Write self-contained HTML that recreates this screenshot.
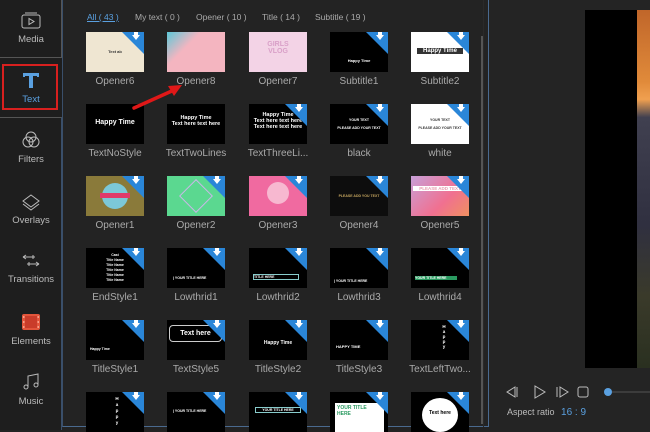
<!DOCTYPE html>
<html><head><meta charset="utf-8"><style>
*{margin:0;padding:0;box-sizing:border-box}
body{width:650px;height:430px;background:#232323;font-family:"Liberation Sans",sans-serif;position:relative;overflow:hidden;color:#bbb}
.a{position:absolute}
.side{left:0;top:0;width:62px;height:430px;background:#1e1e1e}
.sb{position:absolute;left:0;width:62px;text-align:center;font-size:9.5px;color:#bbb}
.sb svg{display:block;margin:0 auto 4px}
.grid{left:62px;top:0;width:427px;height:427px;background:#232323;border-right:1px solid #4a6a8f;border-left:1px solid #3a4f6a;border-bottom:1px solid #4a6a8f}
.t{position:absolute;width:58px;height:40px;background:#000;overflow:hidden;font-weight:bold;color:#fff;text-align:center}
.t .d{position:absolute;right:0;top:0;width:22px;height:22px;background:#2a86d8;clip-path:polygon(0 0,100% 0,100% 100%)}
.t .d:after{content:"";position:absolute;right:4px;top:3px;width:0;height:0;border-left:4px solid transparent;border-right:4px solid transparent;border-top:5px solid #fff}
.t .d:before{content:"";position:absolute;right:6px;top:0;width:4px;height:4px;background:#fff}
.l{position:absolute;width:80px;text-align:center;font-size:10px;color:#aaa}
.tab{top:12px;font-size:8.5px;color:#aaa}
</style></head><body>
<div class="a side"></div>
<div class="a" style="left:0;top:0;width:62px;height:58px;border-right:1px solid #555;border-bottom:1px solid #555"></div>
<div class="sb" style="top:12px"><svg width="20" height="18" viewBox="0 0 20 18"><rect x="1" y="3" width="18" height="13" rx="2" fill="none" stroke="#bbb"/><path d="M4 1h12" stroke="#bbb"/><path d="M8 6.5v6l5-3z" fill="none" stroke="#bbb"/></svg>Media</div>
<div class="a" style="left:2px;top:64px;width:56px;height:46px;border:2px solid #d8201f"></div>
<div class="sb" style="top:70px;color:#5aa0e0"><svg width="20" height="20" viewBox="0 0 20 20"><path d="M2 3h16v4h-2V6h-4v12H8V6H4v1H2z" fill="#5aa0e0"/></svg>Text</div>
<div class="a" style="left:0;top:117px;width:62px;height:313px;border-right:1px solid #3a4f6a;border-top:1px solid #555"></div>
<div class="sb" style="top:130px"><svg width="20" height="20" viewBox="0 0 20 20" fill="none" stroke="#bbb"><circle cx="10" cy="7" r="5"/><circle cx="7" cy="12" r="5"/><circle cx="13" cy="12" r="5"/></svg>Filters</div>
<div class="sb" style="top:193px"><svg width="20" height="18" viewBox="0 0 20 18" fill="none" stroke="#bbb"><path d="M10 2l8 6-8 6-8-6z"/><path d="M2 11l8 6 8-6"/></svg>Overlays</div>
<div class="sb" style="top:252px"><svg width="22" height="18" viewBox="0 0 22 18" fill="none" stroke="#bbb"><path d="M3 5h12M3 5l3-2M3 5l3 2M19 12H7M19 12l-3-2M19 12l-3 2M13 3v4M9 10v4"/></svg>Transitions</div>
<div class="sb" style="top:312px"><svg width="22" height="20" viewBox="0 0 22 20"><rect x="2" y="2" width="18" height="16" rx="2" fill="#e2553b"/><rect x="5" y="4" width="12" height="12" fill="#c93c2a"/><g fill="#f7a08a"><rect x="3" y="4" width="1.5" height="2"/><rect x="3" y="9" width="1.5" height="2"/><rect x="3" y="14" width="1.5" height="2"/><rect x="17.5" y="4" width="1.5" height="2"/><rect x="17.5" y="9" width="1.5" height="2"/><rect x="17.5" y="14" width="1.5" height="2"/></g></svg>Elements</div>
<div class="sb" style="top:372px"><svg width="20" height="20" viewBox="0 0 20 20" fill="none" stroke="#bbb"><path d="M7 15V4l10-2v11"/><circle cx="5" cy="15" r="2"/><circle cx="15" cy="13" r="2"/></svg>Music</div>

<div class="a grid"></div>
<div class="a tab" style="left:87px;color:#5aa0e0;text-decoration:underline">All ( 43 )</div>
<div class="a tab" style="left:135px">My text ( 0 )</div>
<div class="a tab" style="left:196px">Opener ( 10 )</div>
<div class="a tab" style="left:262px">Title ( 14 )</div>
<div class="a tab" style="left:315px">Subtitle ( 19 )</div>
<div class="a" style="left:481px;top:36px;width:3px;height:388px;background:#555"></div>
<div class="a" style="left:483px;top:0;width:1px;height:427px;background:#2a2a2a"></div>

<div id="g"></div>
<script>
var cols=[86,167,249,330,411],rows=[32,104,176,248,320,392];
var items=[
["Opener6","#efe6d2","<div style='font-size:4px;color:#333;margin-top:17px'>Text ab</div>",1],
["Opener8","linear-gradient(135deg,#5cc8d8 0,#f4b5c0 35%,#f4b5c0)","",0],
["Opener7","#f3d3e6","<div style='font-size:7px;color:#d9a0c8;margin-top:9px'>GIRLS<br>VLOG</div>",0],
["Subtitle1","#000","<div style='font-size:4px;margin-top:26px'>Happy Time</div>",1],
["Subtitle2","#fff","<div style='font-size:6px;background:#333;margin:16px 6px 0'>Happy Time</div>",1],
["TextNoStyle","#000","<div style='font-size:7px;margin-top:15px'>Happy Time</div>",0],
["TextTwoLines","#000","<div style='font-size:5.5px;margin-top:11px'>Happy Time<br>Text here text here</div>",0],
["TextThreeLi...","#000","<div style='font-size:5.5px;margin-top:8px'>Happy Time<br>Text here text here<br>Text here text here</div>",1],
["black","#000","<div style='font-size:3.5px;margin-top:14px'>YOUR TEXT<br><br>PLEASE ADD YOUR TEXT</div>",1],
["white","#fff","<div style='font-size:3.5px;margin-top:14px;color:#333'>YOUR TEXT<br><br>PLEASE ADD YOUR TEXT</div>",1],
["Opener1","#8a7a3a","<div style='width:26px;height:26px;border-radius:50%;background:#7cc8d8;margin:7px auto'></div><div style='position:absolute;left:14px;top:17px;width:30px;height:5px;background:#e03a6a'></div>",1],
["Opener2","#5bd890","<div style='width:24px;height:24px;border:1px solid #c9b8e8;transform:rotate(45deg);margin:8px auto'></div>",1],
["Opener3","#f06aa0","<div style='width:22px;height:22px;border-radius:50%;background:#f7b8d0;margin:6px auto'></div>",1],
["Opener4","#0d0d0d","<div style='font-size:3.5px;color:#c8a860;margin-top:18px'>PLEASE ADD YOU TEXT</div>",1],
["Opener5","linear-gradient(135deg,#c8a0d8,#f07090 60%,#f09060)","<div style='font-size:4.5px;background:#fff;color:#e8a0b0;margin:10px 2px'>PLEASE ADD TEXT</div>",1],
["EndStyle1","#000","<div style='font-size:3.5px;line-height:5px;margin-top:5px'>Cast<br>Title Name<br>Title Name<br>Title Name<br>Title Name<br>Title Name</div>",1],
["Lowthrid1","#000","<div style='font-size:3.5px;text-align:left;margin:28px 0 0 6px'>| YOUR TITLE HERE</div>",1],
["Lowthrid2","#000","<div style='font-size:3.5px;text-align:left;border:1px solid #8cc;margin:26px 8px 0 4px'>TITLE HERE</div>",1],
["Lowthrid3","#000","<div style='font-size:3.5px;text-align:left;margin:31px 0 0 4px'>| YOUR TITLE HERE</div>",1],
["Lowthrid4","#000","<div style='font-size:3.5px;background:#2a9a60;text-align:left;margin:28px 12px 0 4px'>YOUR TITLE HERE</div>",1],
["TitleStyle1","#000","<div style='font-size:3.5px;text-align:left;margin:27px 0 0 4px'>Happy Time</div>",1],
["TextStyle5","#000","<div style='font-size:7px;border:1px solid #ccc;border-radius:4px;margin:5px 3px 0 2px;padding:4px 0'>Text here</div>",1],
["TitleStyle2","#000","<div style='font-size:5px;margin-top:20px'>Happy Time</div>",1],
["TitleStyle3","#000","<div style='font-size:4px;text-align:left;margin:24px 0 0 6px'>HAPPY TIME</div>",1],
["TextLeftTwo...","#000","<div style='font-size:4.5px;width:6px;margin:4px 0 0 30px;line-height:5px'>H a p p y</div>",1],
["","#000","<div style='font-size:4.5px;width:6px;margin:4px 0 0 28px;line-height:6px'>H a p p y</div>",1],
["","#000","<div style='font-size:3.5px;text-align:left;margin:17px 0 0 6px'>| YOUR TITLE HERE</div>",1],
["","#000","<div style='font-size:3.5px;border:1px solid #8cc;margin:15px 6px 0'>YOUR TITLE HERE</div>",1],
["","#000","<div style='background:#fff;color:#2a9a60;font-size:5px;text-align:left;margin:11px 4px 0 5px;height:30px;padding:2px'>YOUR TITLE<br>HERE</div>",1],
["","#000","<div style='background:#fff;color:#000;font-size:5px;border-radius:50%;width:36px;height:34px;margin:6px auto;padding-top:12px'>Text here</div>",1]];
var h="";
items.forEach(function(it,i){var c=cols[i%5],r=rows[Math.floor(i/5)];
h+="<div class='t' style='left:"+c+"px;top:"+r+"px;background:"+it[1]+"'>"+it[2]+(it[3]?"<div class='d'></div>":"")+"</div>";
if(it[0])h+="<div class='l' style='left:"+(c-11)+"px;top:"+(r+44)+"px'>"+it[0]+"</div>";});
document.getElementById("g").outerHTML=h;
</script>
<svg class="a" style="left:130px;top:82px" width="56" height="30"><path d="M4 26L44 8" stroke="#e01818" stroke-width="3.5" stroke-linecap="round"/><path d="M52 3L38 4l6 10z" fill="#e01818"/></svg>

<div class="a" style="left:490px;top:0;width:160px;height:430px;background:#242424"></div>
<div class="a" style="left:585px;top:10px;width:52px;height:358px;background:#000"></div>
<div class="a" style="left:637px;top:10px;width:13px;height:358px;background:linear-gradient(#c0662a 0,#e08a3a 20%,#f0a050 25%,#404050 30%,#303040 60%,#3a3a2a 80%,#2a3020)"></div>
<svg class="a" style="left:505px;top:384px" width="145" height="16" fill="none" stroke="#bbb" stroke-width="1"><path d="M2 8l8-5v10z M12 3v10"/><path d="M30 2v12l10-6z"/><path d="M52 3v10M55 3l8 5-8 5z"/><rect x="73" y="3" width="10" height="10" rx="2"/><circle cx="103" cy="8" r="4" fill="#5aa0e0" stroke="none"/><path d="M107 8h40" stroke="#555"/></svg>
<div class="a" style="left:507px;top:407px;font-size:9px;color:#bbb">Aspect ratio <span style="color:#5aa0e0;margin-left:4px;font-size:10px">16 : 9</span></div>
</body></html>
